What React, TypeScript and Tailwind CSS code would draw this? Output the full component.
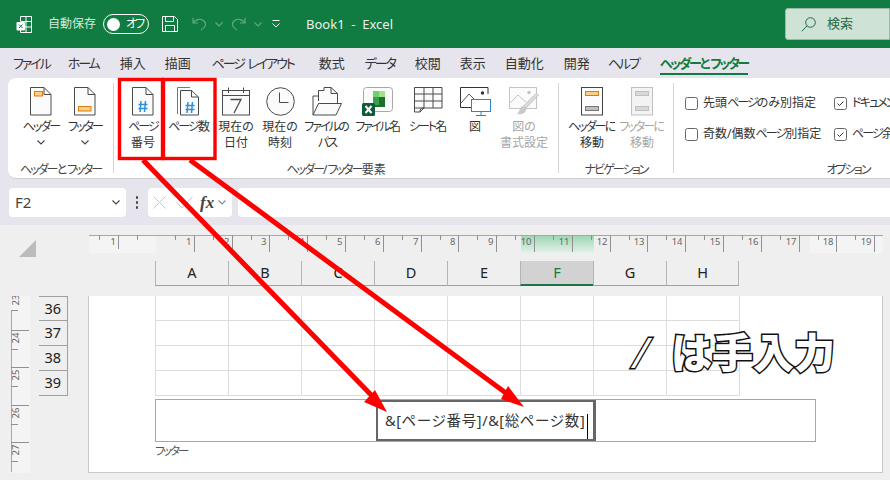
import React from "react";

const T = ({ s, bold }: { s: string; bold?: boolean }) => (
  <>
    {s.split(/([\u30A0-\u30FF]+)/).map((p, i) =>
      /[\u30A0-\u30FF]/.test(p) ? (
        <span key={i} className={bold ? "tracking-[-0.18em]" : "tracking-[-0.16em]"}>{p}</span>
      ) : (
        <span key={i}>{p}</span>
      )
    )}
  </>
);

const Doc = ({ x = 0.5, fill = "#fbfbfb" }: { x?: number; fill?: string }) => (
  <>
    <path d={`M${x} .5H${x + 13.5}L${x + 20.5} 7.5V28H${x}Z`} fill={fill} stroke="#4a4a4a" />
    <path d={`M${x + 13.5} .5V7.5H${x + 20.5}`} fill="none" stroke="#4a4a4a" />
  </>
);

const Hash = ({ x, y }: { x: number; y: number }) => (
  <path
    d={`M${x + 2.5} ${y}L${x + 1.5} ${y + 11}M${x + 7} ${y}L${x + 6} ${y + 11}M${x} ${y + 3.5}H${x + 9}M${x} ${y + 7.5}H${x + 9}`}
    stroke="#2f8fd8"
    strokeWidth="1.5"
    fill="none"
  />
);

const HeaderIcon = () => (
  <svg width="22" height="29" className="block">
    <Doc />
    <rect x="4.5" y="4.5" width="8" height="4.5" fill="#fbcf86" stroke="#e07b10" />
  </svg>
);
const FooterIcon = () => (
  <svg width="22" height="29" className="block">
    <Doc />
    <rect x="4.5" y="19.5" width="12.5" height="4.5" fill="#fbcf86" stroke="#e07b10" />
  </svg>
);
const PageNumIcon = () => (
  <svg width="22" height="29" className="block">
    <Doc />
    <Hash x={6.5} y={14} />
  </svg>
);
const PageCountIcon = () => (
  <svg width="24" height="29" className="block">
    <path d="M.5 27V.5H13" fill="none" stroke="#777" />
    <path d="M3.5 3.5H14.5L21.5 10V28H3.5Z" fill="#fbfbfb" stroke="#4a4a4a" />
    <path d="M14.5 3.5V10H21.5" fill="none" stroke="#4a4a4a" />
    <Hash x={8.5} y={15} />
  </svg>
);
const CalendarIcon = () => (
  <svg width="28" height="29" className="block">
    <rect x=".5" y="3.5" width="27" height="24.5" fill="#fbfbfb" stroke="#4a4a4a" />
    <path d="M.5 8.5H27.5M6.5 .5V6M21.5 .5V6" fill="none" stroke="#4a4a4a" />
    <path d="M8.5 12.5H19L12 26" fill="none" stroke="#4a4a4a" strokeWidth="1.3" />
  </svg>
);
const ClockIcon = () => (
  <svg width="29" height="29" className="block">
    <circle cx="14.5" cy="14.5" r="13.8" fill="#fbfbfb" stroke="#4a4a4a" />
    <path d="M13.5 5.5V15.5H22.5" fill="none" stroke="#4a4a4a" />
  </svg>
);
const FolderIcon = () => (
  <svg width="31" height="29" className="block">
    <path d="M6.5 14V3.5H12V.5H19L25.5 6.5V16" fill="#fbfbfb" stroke="#4a4a4a" />
    <path d="M19 .5V6.5H25.5" fill="none" stroke="#4a4a4a" />
    <path d="M1 28L6.5 16.5H29.5L24 28Z M1 28V9H6" fill="#fbfbfb" stroke="#4a4a4a" />
  </svg>
);
const FileNameIcon = () => (
  <svg width="32" height="30" className="block">
    <rect x="1.5" y=".5" width="29" height="24" rx="3" fill="#fbfbfb" stroke="#a8a8a8" />
    <rect x="11" y="4" width="7" height="7" fill="#6fd06c" />
    <rect x="17" y="4" width="6" height="7" fill="#a6e08c" />
    <rect x="11" y="10" width="6" height="8" fill="#37a04a" />
    <rect x="17" y="10" width="6" height="9" fill="#1f6e2e" />
    <rect x="11" y="18" width="12" height="2" fill="#1f6e2e" />
    <rect x="0" y="16" width="13" height="13" rx="1.5" fill="#0e5c3a" />
    <path d="M3.5 19L9.5 26M9.5 19L3.5 26" stroke="#fff" strokeWidth="2" fill="none" />
  </svg>
);
const SheetIcon = () => (
  <svg width="29" height="28" className="block">
    <path
      d="M.5 .5H28V21H10L6 25H.5Z M.5 7H28M.5 14H28M.5 21H10M10 .5V21M19 .5V21"
      fill="#fbfbfb"
      stroke="#4a4a4a"
    />
    <path d="M6 25C6 22 7 21 10 21" fill="none" stroke="#4a4a4a" />
  </svg>
);
const PictureIcon = () => (
  <svg width="31" height="29" className="block">
    <path d="M16 20.5H.5V.5H28V7" fill="#fff" stroke="#333" />
    <path d="M1 16L9 7L15 13" fill="none" stroke="#555" />
    <circle cx="22.5" cy="6" r="1.7" fill="#333" />
    <rect x="11.5" y="12.5" width="19" height="12" fill="#fff" stroke="#2b88c8" />
    <path d="M21 25V28M16 28.5H26" stroke="#2b88c8" fill="none" />
  </svg>
);
const FormatPictureIcon = () => (
  <svg width="31" height="29" className="block">
    <rect x=".5" y=".5" width="27" height="21" fill="#fbfbfb" stroke="#c4c4c4" />
    <path d="M1 16L9 8L17 15" fill="none" stroke="#c4c4c4" />
    <circle cx="20" cy="5.5" r="1.7" fill="#c4c4c4" />
    <path d="M29.5 8L17 21L14.5 19L27 6.5Z" fill="#dcdcdc" stroke="#c4c4c4" />
    <path d="M14 19C10 20 11 25 8 27C13 28 18 26 17 21Z" fill="#c9c9c9" />
  </svg>
);
const MoveIcon = ({ on }: { on: boolean }) => (
  <svg width="23" height="29" className="block">
    <rect x=".5" y=".5" width="21" height="27.5" fill={on ? "#fbfbfb" : "#f3f3f3"} stroke={on ? "#444" : "#c0c0c0"} />
    <rect x="4.5" y="4.5" width="13" height="4" fill={on ? "#fbcf86" : "#d8d8d8"} stroke={on ? "#e07b10" : "#c0c0c0"} />
    <rect x="4.5" y="19.5" width="13" height="4" fill={on ? "#bdbdbd" : "#d8d8d8"} stroke={on ? "#777" : "#c0c0c0"} />
  </svg>
);

const Chevron = ({ className = "", color = "#444" }: { className?: string; color?: string }) => (
  <svg width="8" height="5" className={className}>
    <path d="M.5 .5L4 4L7.5 .5" fill="none" stroke={color} strokeWidth="1.1" />
  </svg>
);

const tabs: [string, string][] = [
  ["ファイル", "ml-[13px]"],
  ["ホーム", "ml-[18px]"],
  ["挿入", "ml-[21px]"],
  ["描画", "ml-[19px]"],
  ["ページ レイアウト", "ml-[21px]"],
  ["数式", "ml-[25px]"],
  ["データ", "ml-[20px]"],
  ["校閲", "ml-[20px]"],
  ["表示", "ml-[19px]"],
  ["自動化", "ml-[19px]"],
  ["開発", "ml-[20px]"],
  ["ヘルプ", "ml-[18px]"],
];

const RibbonButton = ({
  icon,
  lines,
  width,
  dim,
  chevron,
}: {
  icon: React.ReactNode;
  lines: string[];
  width: string;
  dim?: boolean;
  chevron?: boolean;
}) => (
  <div className={`flex flex-col items-center pt-[9px] ${width}`}>
    <div className="h-[32px] flex items-start justify-center">{icon}</div>
    {lines.map((l) => (
      <div
        key={l}
        className={`h-[16px] leading-[16px] text-[12px] whitespace-nowrap ${dim ? "text-[#a6a6a6]" : "text-[#333]"}`}
      >
        <T s={l} />
      </div>
    ))}
    {chevron && <Chevron className="mt-[5px]" />}
  </div>
);

const GroupLabel = ({ s }: { s: string }) => (
  <div className="pt-[1px] text-center text-[12px] leading-[16px] text-[#444] whitespace-nowrap">
    <T s={s} />
  </div>
);

const Sep = () => <div className="w-px h-[90px] mt-[5px] bg-[#d4d4d4] shrink-0" />;

const Check = ({ label, checked }: { label: string; checked?: boolean }) => (
  <div className="flex items-center gap-[5px] whitespace-nowrap text-[12px] leading-[16px] text-[#333]">
    <svg width="13" height="13" className="shrink-0">
      <rect x=".5" y=".5" width="12" height="12" rx="2" fill="#fff" stroke="#666" />
      {checked && <path d="M3.5 6.5L5.5 8.5L9.5 4.5" fill="none" stroke="#333" />}
    </svg>
    <span>
      <T s={label} />
    </span>
  </div>
);

const cols = ["A", "B", "C", "D", "E", "F", "G", "H"];

const HRuler = () => {
  const ox = 67;
  const s = 37.8;
  const nums = Array.from({ length: 19 }, (_, i) => i + 1);
  return (
    <svg width="794" height="18" className="block">
      <defs>
        <linearGradient id="rg" x1="0" y1="0" x2="0" y2="1">
          <stop offset="0" stopColor="#9ad6b0" />
          <stop offset="1" stopColor="#e6f1ea" />
        </linearGradient>
      </defs>
      <rect x="0" y="0" width={ox} height="18" fill="#f4f4f4" />
      <rect x="721" y="0" width="73" height="18" fill="#f4f4f4" />
      <rect x="432" y="0" width="73" height="18" fill="url(#rg)" />
      <rect x="0" y="0" width="794" height="1" fill="#a8a8a8" />
      <path d="M29.5 0V14M10.5 0V5M48.5 0V5" stroke="#909090" fill="none" />
      <text x="27" y="10" textAnchor="end" fontSize="9.5" fill="#666">1</text>
      {nums.map((n) => {
        const x = Math.round(ox + n * s) + 0.5;
        const m = Math.round(ox + (n - 0.5) * s) + 0.5;
        return (
          <g key={n}>
            <path d={`M${x} 0V17M${m} 0V5`} stroke="#909090" fill="none" />
            <text x={x - 3} y="10" textAnchor="end" fontSize="9.5" fill="#666">{n}</text>
          </g>
        );
      })}
    </svg>
  );
};

const VRuler = () => {
  const majors: [number, string][] = [
    [34, "24"],
    [71, "25"],
    [109, "26"],
    [146, "27"],
  ];
  return (
    <svg width="19" height="177" className="block">
      <rect x="0" y="0" width="19" height="177" fill="#f4f4f4" />
      <rect x="0" y="14" width="1" height="162" fill="#a8a8a8" />
      <path d="M0 14.5H7" stroke="#909090" fill="none" />
      <text transform="translate(8 4) rotate(-90)" fontSize="9.5" fill="#666" textAnchor="middle">23</text>
      {majors.map(([y, t]) => (
        <g key={t}>
          <path d={`M0 ${y + 0.5}H18M0 ${y + 19.5}H7`} stroke="#909090" fill="none" />
          <text transform={`translate(8 ${y + 8}) rotate(-90)`} fontSize="9.5" fill="#666" textAnchor="middle">{t}</text>
        </g>
      ))}
    </svg>
  );
};

export default function App() {
  return (
    <div className="relative w-[890px] h-[480px] overflow-hidden flex flex-col bg-[#efefef] font-['Noto_Sans','Noto_Sans_CJK_JP',sans-serif] [font-feature-settings:'palt']">
      {/* title bar */}
      <div className="h-[48px] shrink-0 bg-[#107c41] flex items-center text-white">
        <svg width="16" height="17" className="ml-[16px] shrink-0">
          <path d="M4.5 5V.5H15.5V16.5H4.5V13M10 .5V16.5M4.5 5.5H15.5M4.5 11H15.5" fill="none" stroke="#fff" />
          <rect x="0.5" y="6" width="8.5" height="8.5" rx="1" fill="#fff" />
          <path d="M3 8.5L6.5 12M6.5 8.5L3 12" stroke="#107c41" fill="none" />
        </svg>
        <div className="ml-[16px] text-[12px] text-[#d6e8dd] whitespace-nowrap">自動保存</div>
        <div className="ml-[7px] w-[46px] h-[20px] rounded-full border border-white flex items-center pl-[3px]">
          <div className="w-[13px] h-[13px] rounded-full bg-white" />
          <div className="ml-[6px] text-[12px] leading-none whitespace-nowrap">
            <T s="オフ" />
          </div>
        </div>
        <svg width="16" height="16" className="ml-[13px] shrink-0">
          <path d="M.5 .5H12.5L15.5 3.5V15.5H.5Z M3.5 .5V5.5H11.5V.5M3.5 15.5V9.5H12.5V15.5" fill="none" stroke="#fff" />
        </svg>
        <svg width="15" height="14" className="ml-[14px] shrink-0">
          <path d="M1 1V6H6M1 6C4 2 9 1 12 4C15 7 13 11 9 13" fill="none" stroke="#62a883" strokeWidth="1.2" />
        </svg>
        <Chevron className="ml-[8px]" color="#62a883" />
        <svg width="15" height="14" className="ml-[8px] shrink-0">
          <path d="M14 1V6H9M14 6C11 2 6 1 3 4C0 7 2 11 6 13" fill="none" stroke="#62a883" strokeWidth="1.2" />
        </svg>
        <Chevron className="ml-[8px]" color="#62a883" />
        <svg width="8" height="8" className="ml-[10px] shrink-0">
          <path d="M.5 .5H7.5M.5 3.5L4 7L7.5 3.5" fill="none" stroke="#fff" />
        </svg>
        <div className="ml-[26px] mt-[2px] text-[13px] whitespace-pre text-[#e8f2ec]">Book1  -  Excel</div>
        <div className="ml-auto w-[105px] h-[32px] bg-[#cfe2d6] border border-[#9db8a8] rounded-l-[3px] flex items-center pl-[15px] text-[#1f6b43] shrink-0">
          <svg width="15" height="15">
            <circle cx="9.5" cy="5.5" r="4.8" fill="none" stroke="#1f6b43" />
            <path d="M6 9L.7 14.3" stroke="#1f6b43" fill="none" />
          </svg>
          <div className="ml-[11px] text-[13px]">検索</div>
        </div>
      </div>

      {/* tabs */}
      <div className="h-[30px] shrink-0 bg-[#e6e4ec] flex items-center pt-[2px] text-[13px] text-[#333] whitespace-nowrap">
        {tabs.map(([t, m]) => (
          <div key={t} className={m}>
            <T s={t} />
          </div>
        ))}
        <div className="ml-[21px] h-full flex flex-col items-center justify-center relative font-semibold text-[#107c41]">
          <div>
            <T s="ヘッダーとフッター" bold />
          </div>
          <div className="absolute bottom-[3px] left-0 right-0 h-[2px] bg-[#107c41]" />
        </div>
      </div>

      {/* ribbon bar */}
      <div className="bg-[#e6e4ec] shrink-0 h-[102px]">
        <div className="ml-[8px] h-[101px] bg-white rounded-l-[8px] border-b border-[#cfcfcf] flex overflow-hidden">
          <div className="w-[105px] shrink-0 flex flex-col">
            <div className="h-[83px] flex pl-[11px]">
              <RibbonButton icon={<HeaderIcon />} lines={["ヘッダー"]} width="w-[44px]" chevron />
              <RibbonButton icon={<FooterIcon />} lines={["フッター"]} width="w-[44px]" chevron />
            </div>
            <GroupLabel s="ヘッダーとフッター" />
          </div>
          <Sep />
          <div className="w-[444px] shrink-0 flex flex-col">
            <div className="h-[83px] flex pl-[6px]">
              <RibbonButton icon={<PageNumIcon />} lines={["ページ", "番号"]} width="w-[46px]" />
              <RibbonButton icon={<PageCountIcon />} lines={["ページ数"]} width="w-[46px]" />
              <RibbonButton icon={<CalendarIcon />} lines={["現在の", "日付"]} width="w-[48px]" />
              <RibbonButton icon={<ClockIcon />} lines={["現在の", "時刻"]} width="w-[40px]" />
              <RibbonButton icon={<FolderIcon />} lines={["ファイルの", "パス"]} width="w-[54px]" />
              <RibbonButton icon={<FileNameIcon />} lines={["ファイル名"]} width="w-[48px]" />
              <RibbonButton icon={<SheetIcon />} lines={["シート名"]} width="w-[52px]" />
              <RibbonButton icon={<PictureIcon />} lines={["図"]} width="w-[42px]" />
              <RibbonButton icon={<FormatPictureIcon />} lines={["図の", "書式設定"]} width="w-[56px]" dim />
            </div>
            <GroupLabel s="ヘッダー/フッター要素" />
          </div>
          <Sep />
          <div className="w-[114px] shrink-0 flex flex-col">
            <div className="h-[83px] flex pl-[8px]">
              <RibbonButton icon={<MoveIcon on />} lines={["ヘッダーに", "移動"]} width="w-[50px]" />
              <RibbonButton icon={<MoveIcon on={false} />} lines={["フッターに", "移動"]} width="w-[50px]" dim />
            </div>
            <GroupLabel s="ナビゲーション" />
          </div>
          <Sep />
          <div className="w-[348px] shrink-0 flex flex-col">
            <div className="h-[83px] pl-[11px] pt-[17px] flex">
              <div className="w-[149px] flex flex-col gap-[15px] shrink-0">
                <Check label="先頭ページのみ別指定" />
                <Check label="奇数/偶数ページ別指定" />
              </div>
              <div className="flex flex-col gap-[15px]">
                <Check label="ドキュメントに合わせて拡大/縮小" checked />
                <Check label="ページ余白に合わせて配置" checked />
              </div>
            </div>
            <GroupLabel s="オプション" />
          </div>
        </div>
      </div>

      {/* formula bar */}
      <div className="h-[45px] shrink-0 bg-[#e6e4ec] flex items-start pt-[8px] pl-[9px]">
        <div className="w-[117px] h-[29px] bg-white rounded-[4px] flex items-center pl-[6px] pr-[6px] text-[15px] text-[#444] shrink-0">
          F2
          <Chevron className="ml-auto" />
        </div>
        <div className="w-[22px] flex flex-col items-center gap-[2.5px] shrink-0">
          <div className="mt-[8px] w-[2.5px] h-[2.5px] bg-[#444] rounded-full" />
          <div className="w-[2.5px] h-[2.5px] bg-[#444] rounded-full" />
          <div className="w-[2.5px] h-[2.5px] bg-[#444] rounded-full" />
        </div>
        <div className="w-[84px] h-[29px] bg-white rounded-[4px] flex items-center pl-[5px] shrink-0">
          <svg width="13" height="13">
            <path d="M.5 .5L12.5 12.5M12.5 .5L.5 12.5" stroke="#c8c8c8" fill="none" />
          </svg>
          <svg width="17" height="13" className="ml-[10px]">
            <path d="M.5 6L6 12L16.5 .5" stroke="#c8c8c8" fill="none" />
          </svg>
          <div className="ml-[7px] font-['Liberation_Serif',serif] italic font-bold text-[17px] text-[#444] leading-none">fx</div>
          <Chevron className="ml-[4px]" color="#888" />
        </div>
        <div className="ml-[6px] flex-1 h-[29px] bg-white rounded-l-[4px]" />
      </div>

      {/* sheet */}
      <div className="flex-1 flex flex-col text-[#222]">
        <div className="h-[71px] shrink-0 flex pl-[19px] pt-[10px]">
          <svg width="17" height="17" className="mt-[5px] shrink-0">
            <path d="M17 0V17H0Z" fill="#bcbcbc" />
          </svg>
          <div className="ml-[53px]">
            <HRuler />
            <div className="mt-[8px] ml-[66px] flex">
              {cols.map((c) => (
                <div
                  key={c}
                  className={`w-[73px] h-[25px] flex items-center justify-center text-[14.5px] border-l border-b ${c === "F" ? "bg-[#d2d2d2] border-b-2 border-b-[#217346] text-[#107c41]" : "border-b-[#a0a0a0]"} border-l-[#b4b4b4] ${c === "H" ? "border-r border-r-[#b4b4b4]" : ""}`}
                >
                  {c}
                </div>
              ))}
            </div>
          </div>
        </div>
        <div className="flex-1 flex pl-[11px]">
          <div className="shrink-0">
            <VRuler />
          </div>
          <div className="ml-[9px] w-[29px] shrink-0">
            {["36", "37", "38", "39"].map((n, i) => (
              <div
                key={n}
                className={`h-[25px] ${i === 0 ? "border-t border-t-[#a0a0a0]" : ""} border-r border-b border-[#a0a0a0] flex items-center justify-end pr-[6px] text-[14.5px]`}
              >
                {n}
              </div>
            ))}
          </div>
          <div className="ml-[20px] w-[795px] h-[177px] bg-white border-x border-b border-[#c8c8c8] shrink-0 pl-[66px] flex flex-col">
            <div className="flex flex-wrap w-[585px]">
              {Array.from({ length: 32 }, (_, i) => (
                <div
                  key={i}
                  className={`border-l border-b border-[#dcdcdc] h-[25px] ${i % 8 === 7 ? "w-[74px] border-r" : "w-[73px]"}`}
                />
              ))}
            </div>
            <div className="mt-[3px] w-[661px] h-[43px] border border-[#a6a6a6] flex pl-[220px]">
              <div className="w-[220px] h-full border-t-2 border-l-2 border-b-2 border-r-[3px] border-[#666] flex items-center pl-[7px] text-[14.5px] tracking-[0.6px] text-[#333] whitespace-nowrap [font-feature-settings:normal] relative">
                &amp;[ページ番号]/&amp;[総ページ数]
                <div className="absolute right-[5px] top-[12px] bottom-0 w-px bg-black" />
              </div>
            </div>
            <div className="mt-[2px] text-[11.5px] leading-[14px] text-[#555]">
              <T s="フッター" />
            </div>
          </div>
        </div>
      </div>

      {/* annotation overlay */}
      <div className="absolute left-[634px] top-[331px] flex items-center whitespace-nowrap leading-none pointer-events-none text-white [font-feature-settings:normal]">
        <span className="inline-block -skew-x-12 text-[42px] font-normal [-webkit-text-stroke:3px_#111] [paint-order:stroke_fill] w-[37px]">/</span>
        <span className="text-[41px] font-black [-webkit-text-stroke:3px_#111] [paint-order:stroke_fill]">は手入力</span>
      </div>
      <svg width="890" height="480" className="absolute left-0 top-0 pointer-events-none">
        <rect x="119.5" y="79.5" width="43" height="79" fill="none" stroke="#ff0000" strokeWidth="3.4" />
        <rect x="163.5" y="79.5" width="51.5" height="79" fill="none" stroke="#ff0000" strokeWidth="3.4" />
        <path d="M143 160L378 402" stroke="#ff0000" strokeWidth="5" fill="none" />
        <path d="M387 412L364 402L375 390Z" fill="#ff0000" />
        <path d="M190 160L510 396" stroke="#ff0000" strokeWidth="5" fill="none" />
        <path d="M524 407L501 399L508 386Z" fill="#ff0000" />
      </svg>
    </div>
  );
}
